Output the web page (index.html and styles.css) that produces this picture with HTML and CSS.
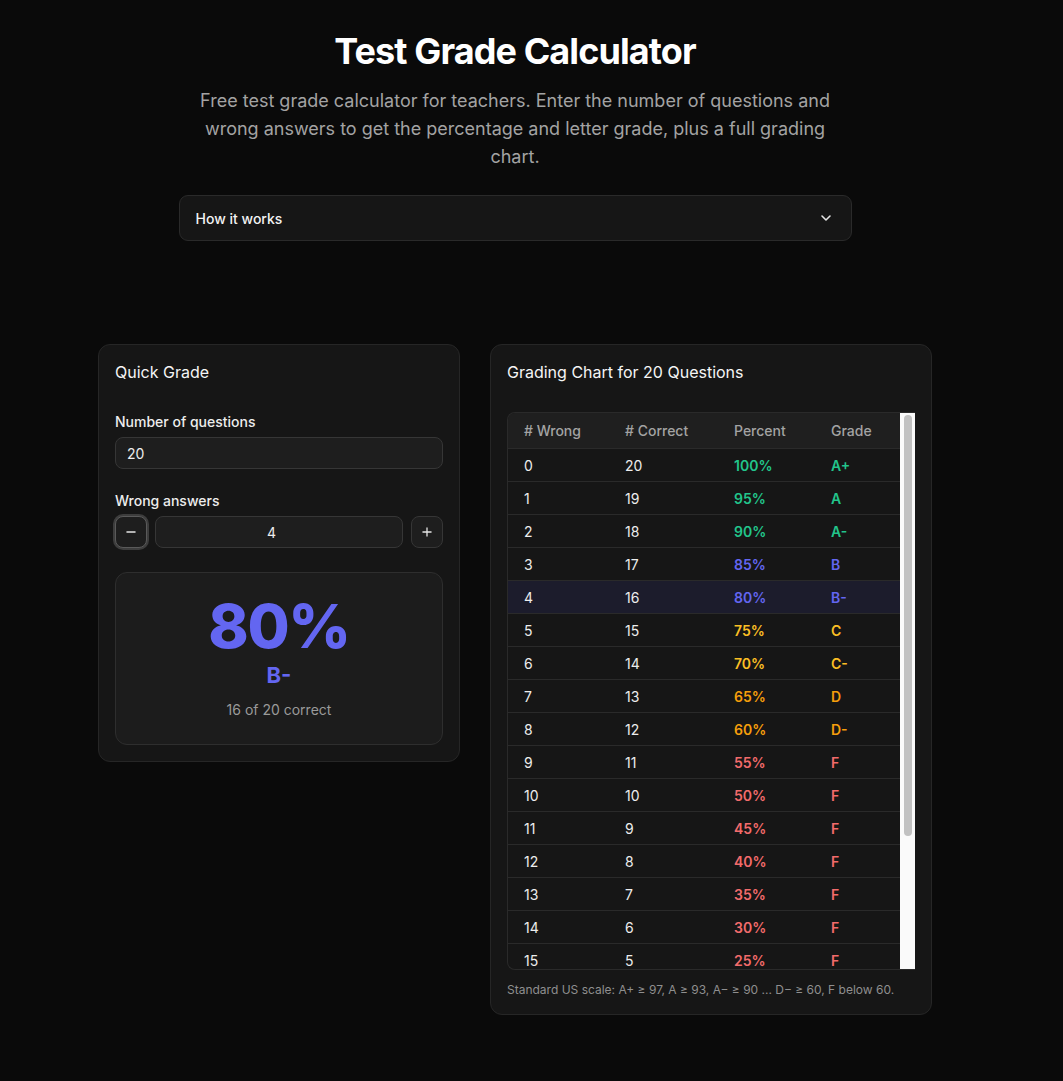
FILE: index.html
```html
<!DOCTYPE html>
<html lang="en">
<head>
  <meta charset="UTF-8" />
  <meta name="viewport" content="width=device-width, initial-scale=1" />
  <title>Test Grade Calculator</title>
  <link rel="stylesheet" href="styles.css">
</head>
<body>
  <div class="page">
    <header class="intro">
      <h1>Test Grade Calculator</h1>
      <p class="lead">Free test grade calculator for teachers. Enter the number of questions and wrong answers to get the percentage and letter grade, plus a full grading chart.</p>
      <details class="how">
        <summary>
          <span>How it works</span>
          <svg class="chev" width="16" height="16" viewBox="0 0 24 24" fill="none" stroke="currentColor" stroke-width="2.4" stroke-linecap="round" stroke-linejoin="round"><path d="M6 9l6 6 6-6"/></svg>
        </summary>
        <p>The percentage is the number of correct answers divided by the number of questions. The letter grade follows the standard US scale.</p>
      </details>
    </header>

    <div class="grid">
      <section class="card">
        <h2>Quick Grade</h2>
        <label class="field-label" for="total">Number of questions</label>
        <input class="input" id="total" type="text" value="20" />

        <label class="field-label" for="wrong">Wrong answers</label>
        <div class="stepper">
          <button class="step step-focus" id="minusBtn" aria-label="decrease">
            <svg width="14" height="14" viewBox="0 0 24 24" fill="none" stroke="currentColor" stroke-width="2.2" stroke-linecap="round"><path d="M5 12h14"/></svg>
          </button>
          <input class="input center" id="wrong" type="text" value="4" />
          <button class="step" id="plusBtn" aria-label="increase">
            <svg width="14" height="14" viewBox="0 0 24 24" fill="none" stroke="currentColor" stroke-width="2.2" stroke-linecap="round"><path d="M12 5v14M5 12h14"/></svg>
          </button>
        </div>

        <div class="result">
          <div class="result-pct" id="resPct">80%</div>
          <div class="result-grade" id="resGrade">B-</div>
          <div class="result-sub" id="resSub">16 of 20 correct</div>
        </div>
      </section>

      <section class="card">
        <h2 id="chartTitle">Grading Chart for 20 Questions</h2>
        <div class="table-wrap">
          <div class="table-scroll" id="tableScroll">
            <table class="chart">
              <colgroup>
                <col class="c-wrong"><col class="c-correct"><col class="c-pct"><col>
              </colgroup>
              <thead>
                <tr><th># Wrong</th><th># Correct</th><th>Percent</th><th>Grade</th></tr>
              </thead>
              <tbody id="chartBody"></tbody>
            </table>
          </div>
          <div class="scroll-rail"><div class="scroll-thumb" id="scrollThumb"></div></div>
        </div>
        <p class="note">Standard US scale: A+ ≥ 97, A ≥ 93, A− ≥ 90 ... D− ≥ 60, F below 60.</p>
      </section>
    </div>
  </div>

  <script>
    const totalInput = document.getElementById('total');
    const wrongInput = document.getElementById('wrong');
    const chartBody = document.getElementById('chartBody');
    const chartTitle = document.getElementById('chartTitle');
    const tableScroll = document.getElementById('tableScroll');
    const scrollThumb = document.getElementById('scrollThumb');

    function letter(pct) {
      if (pct >= 97) return 'A+';
      if (pct >= 93) return 'A';
      if (pct >= 90) return 'A-';
      if (pct >= 87) return 'B+';
      if (pct >= 83) return 'B';
      if (pct >= 80) return 'B-';
      if (pct >= 77) return 'C+';
      if (pct >= 73) return 'C';
      if (pct >= 70) return 'C-';
      if (pct >= 67) return 'D+';
      if (pct >= 63) return 'D';
      if (pct >= 60) return 'D-';
      return 'F';
    }

    // colour band by letter
    function tone(grade) {
      return 'g-' + grade.charAt(0).toLowerCase();
    }

    // size and place the thumb of the chart's scroll rail
    function syncThumb() {
      const view = tableScroll.clientHeight;
      const full = tableScroll.scrollHeight;
      const railH = view - 4;
      const h = Math.max(24, Math.round(railH * view / full));
      const top = full > view ? Math.round((railH - h) * tableScroll.scrollTop / (full - view)) : 0;
      scrollThumb.style.height = h + 'px';
      scrollThumb.style.transform = 'translateY(' + top + 'px)';
      scrollThumb.style.display = full > view ? 'block' : 'none';
    }

    function render() {
      const total = parseInt(totalInput.value) || 0;
      let wrong = parseInt(wrongInput.value) || 0;
      if (wrong > total) wrong = total;
      const correct = total - wrong;
      const pct = total ? Math.round(correct / total * 100) : 0;
      const grade = letter(pct);

      const resPct = document.getElementById('resPct');
      const resGrade = document.getElementById('resGrade');
      resPct.textContent = pct + '%';
      resGrade.textContent = grade;
      resPct.className = 'result-pct ' + tone(grade);
      resGrade.className = 'result-grade ' + tone(grade);
      document.getElementById('resSub').textContent = correct + ' of ' + total + ' correct';
      chartTitle.textContent = 'Grading Chart for ' + total + ' Questions';

      let rows = '';
      for (let w = 0; w <= total; w++) {
        const p = Math.round((total - w) / total * 100);
        const g = letter(p);
        rows += '<tr' + (w === wrong ? ' class="current"' : '') + '>' +
          '<td>' + w + '</td><td>' + (total - w) + '</td>' +
          '<td class="strong ' + tone(g) + '">' + p + '%</td>' +
          '<td class="strong ' + tone(g) + '">' + g + '</td></tr>';
      }
      chartBody.innerHTML = rows;
      syncThumb();
    }

    document.getElementById('minusBtn').addEventListener('click', () => {
      wrongInput.value = Math.max(0, (parseInt(wrongInput.value) || 0) - 1);
      render();
    });
    document.getElementById('plusBtn').addEventListener('click', () => {
      wrongInput.value = (parseInt(wrongInput.value) || 0) + 1;
      render();
    });
    totalInput.addEventListener('input', render);
    wrongInput.addEventListener('input', render);
    tableScroll.addEventListener('scroll', syncThumb);

    render();
  </script>
</body>
</html>
```

FILE: styles.css
```css
body {
  margin: 0;
  padding: 31px 33px 40px 0;
  font-family: 'Inter', 'Noto Sans', sans-serif;
  background-color: #0a0a0a;
  color: #ededed;
}
.page {
  width: 834px;
  margin: 0 auto;
}
.intro {
  text-align: center;
}
h1 {
  margin: 0;
  font-size: 36px;
  line-height: 40px;
  font-weight: 700;
  color: #fff;
  letter-spacing: -0.9px;
}
.lead {
  max-width: 640px;
  margin: 16px auto 24px;
  font-size: 18px;
  line-height: 28px;
  color: #a3a3a3;
}
.how {
  width: 671px;
  margin: 0 auto;
  background: #161616;
  border: 1px solid #2a2a2a;
  border-radius: 9px;
  text-align: left;
}
.how summary {
  list-style: none;
  display: flex;
  align-items: center;
  justify-content: space-between;
  height: 44px;
  padding: 0 17px 0 16px;
  font-size: 14px;
  font-weight: 450;
  color: #f2f2f2;
  cursor: pointer;
}
.how summary::-webkit-details-marker {
  display: none;
}
.how p {
  margin: 0;
  padding: 0 16px 14px;
  font-size: 14px;
  color: #a1a1a1;
}
.chev {
  color: #e5e5e5;
}
.grid {
  display: grid;
  grid-template-columns: 362px 442px;
  gap: 30px;
  align-items: start;
  margin-top: 103px;
}
.card {
  background: #161616;
  border: 1px solid #262626;
  border-radius: 12px;
  padding: 15px 16px 16px;
}
.card h2 {
  margin: 0 0 28px;
  font-size: 16px;
  line-height: 24px;
  font-weight: 400;
  color: #f5f5f5;
}
.field-label {
  display: block;
  font-size: 14px;
  line-height: 20px;
  font-weight: 450;
  color: #ededed;
  margin-bottom: 5px;
}
.input {
  display: block;
  box-sizing: border-box;
  width: 100%;
  height: 32px;
  margin: 0 0 22px;
  padding: 0 11px;
  background: #1e1e1e;
  border: 1px solid #363636;
  border-radius: 8px;
  font-family: inherit;
  font-size: 14px;
  color: #ededed;
  outline: none;
}
.input.center {
  text-align: center;
  margin: 0;
  padding-right: 26px;
  flex: 1;
}
.stepper {
  display: flex;
  gap: 8px;
  margin-bottom: 24px;
}
.step {
  flex: none;
  width: 32px;
  height: 32px;
  display: flex;
  align-items: center;
  justify-content: center;
  padding: 0;
  background: #1e1e1e;
  border: 1px solid #363636;
  border-radius: 8px;
  color: #e5e5e5;
  cursor: pointer;
}
.step-focus {
  border-color: #5a5a5a;
  box-shadow: 0 0 0 2px #3d3d3d;
}
.result {
  background: #1c1c1c;
  border: 1px solid #2e2e2e;
  border-radius: 12px;
  padding: 23px 16px 24px;
  text-align: center;
}
.result-pct {
  font-size: 61px;
  line-height: 60px;
  font-weight: 800;
  letter-spacing: -1.4px;
}
.result-grade {
  margin-top: 5px;
  font-size: 22px;
  line-height: 28px;
  font-weight: 700;
}
.result-sub {
  margin-top: 11px;
  font-size: 14px;
  line-height: 20px;
  color: #9a9a9a;
}
.table-wrap {
  display: flex;
  height: 556px;
  border: 1px solid #2a2a2a;
  border-right: 0;
  border-radius: 8px 0 0 8px;
  overflow: hidden;
}
.table-scroll {
  flex: 1;
  overflow-y: auto;
  scrollbar-width: none;
}
.table-scroll::-webkit-scrollbar {
  display: none;
}
.scroll-rail {
  flex: none;
  width: 15px;
  padding: 2px 0;
  box-sizing: border-box;
  background: #fafafa;
}
.scroll-thumb {
  width: 8px;
  height: 421px;
  margin: 0 auto;
  background: #c1c1c1;
  border-radius: 4px;
}
.chart {
  width: 100%;
  border-collapse: collapse;
  table-layout: fixed;
  font-size: 14px;
}
.c-wrong { width: 101px; }
.c-correct { width: 109px; }
.c-pct { width: 97px; }
.chart th {
  position: sticky;
  top: 0;
  height: 35px;
  padding: 0 16px;
  background: #1f1f1f;
  text-align: left;
  font-weight: 500;
  color: #a3a3a3;
  border-bottom: 1px solid #2a2a2a;
}
.chart td {
  height: 32px;
  padding: 0 16px;
  color: #ededed;
  border-bottom: 1px solid #2a2a2a;
}
.chart tr.current td {
  background: #1c1c2c;
}
.chart td.strong {
  font-weight: 600;
}
.g-a { color: #22c58b !important; }
.g-b { color: #6366f1 !important; }
.g-c { color: #fbbf24 !important; }
.g-d { color: #f59e0b !important; }
.g-f { color: #f26b6b !important; }
.note {
  margin: 12px 0 0;
  font-size: 12px;
  line-height: 16px;
  color: #8f8f8f;
}
```
